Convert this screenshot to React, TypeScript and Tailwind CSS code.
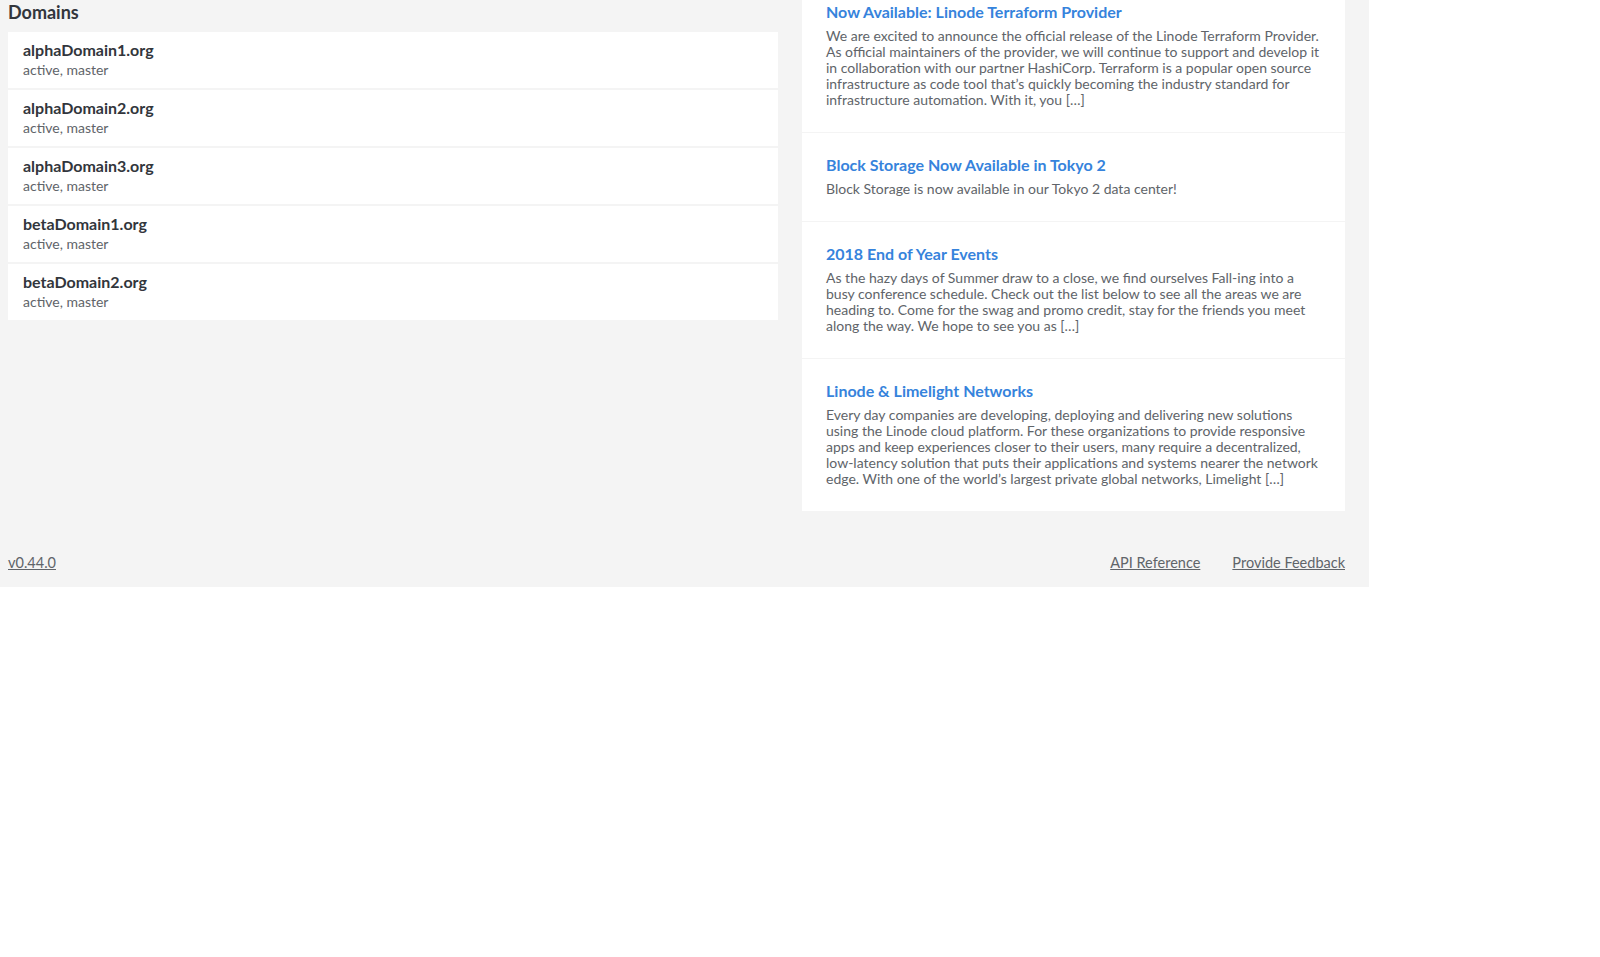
import React from "react";

const domains = [
  "alphaDomain1.org",
  "alphaDomain2.org",
  "alphaDomain3.org",
  "betaDomain1.org",
  "betaDomain2.org",
];

const news = [
  {
    title: "Now Available: Linode Terraform Provider",
    body: "We are excited to announce the official release of the Linode Terraform Provider. As official maintainers of the provider, we will continue to support and develop it in collaboration with our partner HashiCorp. Terraform is a popular open source infrastructure as code tool that’s quickly becoming the industry standard for infrastructure automation. With it, you […]",
  },
  {
    title: "Block Storage Now Available in Tokyo 2",
    body: "Block Storage is now available in our Tokyo 2 data center!",
  },
  {
    title: "2018 End of Year Events",
    body: "As the hazy days of Summer draw to a close, we find ourselves Fall-ing into a busy conference schedule. Check out the list below to see all the areas we are heading to. Come for the swag and promo credit, stay for the friends you meet along the way. We hope to see you as […]",
  },
  {
    title: "Linode & Limelight Networks",
    body: "Every day companies are developing, deploying and delivering new solutions using the Linode cloud platform. For these organizations to provide responsive apps and keep experiences closer to their users, many require a decentralized, low-latency solution that puts their applications and systems nearer the network edge. With one of the world’s largest private global networks, Limelight […]",
  },
];

export default function App() {
  return (
    <div
      className="w-[1369px] bg-[#f4f4f4] pl-2 pr-6 pb-[15px]"
      style={{ fontFamily: "Lato, 'Noto Sans', sans-serif" }}
    >
      <div className="grid grid-cols-[770px_543px] gap-6 items-start">
        <div>
          <h2 className="pt-[1px] h-[32px] text-[18px] leading-[22px] font-bold text-[#32363c]">
            Domains
          </h2>
          <div className="flex flex-col gap-[2px]">
            {domains.map((d) => (
              <div key={d} className="bg-white h-[56px] pl-[15px] pt-[9px]">
                <div className="text-[16px] leading-[18px] font-bold text-[#32363c]">{d}</div>
                <div className="mt-[3px] text-[14px] leading-[16px] text-[#606469]">
                  active, master
                </div>
              </div>
            ))}
          </div>
        </div>
        <div className="bg-white">
          {news.map((n, i) => (
            <div
              key={n.title}
              className={`px-6 pb-6 ${i === 0 ? "pt-[3px]" : "pt-[23px]"} ${
                i < news.length - 1 ? "border-b border-[#f4f4f4]" : ""
              }`}
            >
              <div className="text-[16px] leading-[18px] font-bold text-[#3683dc]">{n.title}</div>
              <div className="mt-[7px] text-[14px] leading-[16px] text-[#606469]">{n.body}</div>
            </div>
          ))}
        </div>
      </div>
      <div className="mt-[43px] flex items-center justify-between text-[14.5px] leading-[18px] text-[#606469]">
        <span className="underline">v0.44.0</span>
        <div className="flex gap-[32px]">
          <span className="underline">API Reference</span>
          <span className="underline">Provide Feedback</span>
        </div>
      </div>
    </div>
  );
}
